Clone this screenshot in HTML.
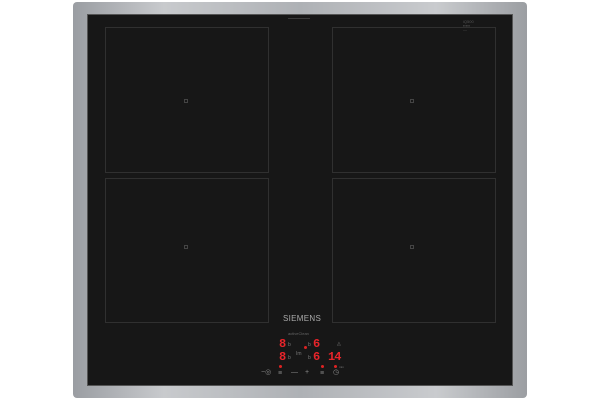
<!DOCTYPE html>
<html><head><style>
body{margin:0;width:600px;height:400px;background:#fff;position:relative;overflow:hidden;font-family:"Liberation Sans",sans-serif}
.frame{position:absolute;left:73px;top:2px;width:454px;height:396px;border-radius:4px;background:linear-gradient(90deg,#9a9da2,#c8cacd 20%,#aeb1b5 50%,#c9cbce 80%,#9b9ea2)}
.glass{position:absolute;left:88px;top:15px;width:424px;height:370px;background:#171717;box-shadow:0 0 0 1px #555}
.z{position:absolute;border:1px solid #303030}
.d{position:absolute;width:2px;height:2px;border:1px solid #444}
.r{position:absolute;color:#e8242a;font-family:"Liberation Mono",monospace;font-size:12px;font-weight:bold;line-height:12px}
.g{position:absolute;color:#8a8a8a;font-size:7px;line-height:7px}
.s{position:absolute;color:#777;font-size:5px;line-height:5px}
.dot{position:absolute;width:3px;height:3px;background:#d22;border-radius:50%}
</style></head><body>
<div class="frame"></div>
<div class="glass">
<div class="z" style="left:17px;top:12px;width:162px;height:144px"></div>
<div class="z" style="left:17px;top:163px;width:162px;height:143px"></div>
<div class="z" style="left:244px;top:12px;width:162px;height:144px"></div>
<div class="z" style="left:244px;top:163px;width:162px;height:143px"></div>
<div class="d" style="left:96px;top:84px"></div>
<div class="d" style="left:322px;top:84px"></div>
<div class="d" style="left:96px;top:230px"></div>
<div class="d" style="left:322px;top:230px"></div>
<div style="position:absolute;left:200px;top:3px;width:22px;height:1px;background:#3a3a3a"></div>
<div style="position:absolute;left:375px;top:5px;width:20px;height:12px;color:#555;font-size:4px;line-height:4px">iQ500<br>▪▪▪▪▪<br>—</div>
<div style="position:absolute;left:195px;top:299px;color:#aaa;font-size:8px;letter-spacing:0.3px">SIEMENS</div>
<div class="s" style="left:200px;top:316px;font-size:4px;color:#666">activeClean</div>
<div class="r" style="left:191px;top:323px">8</div>
<div class="s" style="left:200px;top:328px">b</div>
<div class="dot" style="left:216px;top:331px"></div>
<div class="s" style="left:220px;top:328px">b</div>
<div class="r" style="left:225px;top:323px">6</div>
<div class="s" style="left:208px;top:337px">Im</div>
<div class="r" style="left:191px;top:336px">8</div>
<div class="s" style="left:200px;top:341px">b</div>
<div class="s" style="left:220px;top:341px">b</div>
<div class="r" style="left:225px;top:336px">6</div>
<div class="s" style="left:249px;top:327px">◬</div>
<div class="r" style="left:240px;top:336px;letter-spacing:-1px">14</div>
<div class="dot" style="left:191px;top:350px"></div>
<div class="dot" style="left:233px;top:350px"></div>
<div class="dot" style="left:246px;top:350px"></div>
<div class="s" style="left:251px;top:350px;font-size:3px">min</div>
<div class="g" style="left:173px;top:354px">−◎</div>
<div class="g" style="left:190px;top:355px">≡</div>
<div class="g" style="left:203px;top:354px">—</div>
<div class="g" style="left:217px;top:354px">+</div>
<div class="g" style="left:232px;top:355px">≡</div>
<div class="g" style="left:245px;top:354px">◷</div>
</div>
</body></html>
